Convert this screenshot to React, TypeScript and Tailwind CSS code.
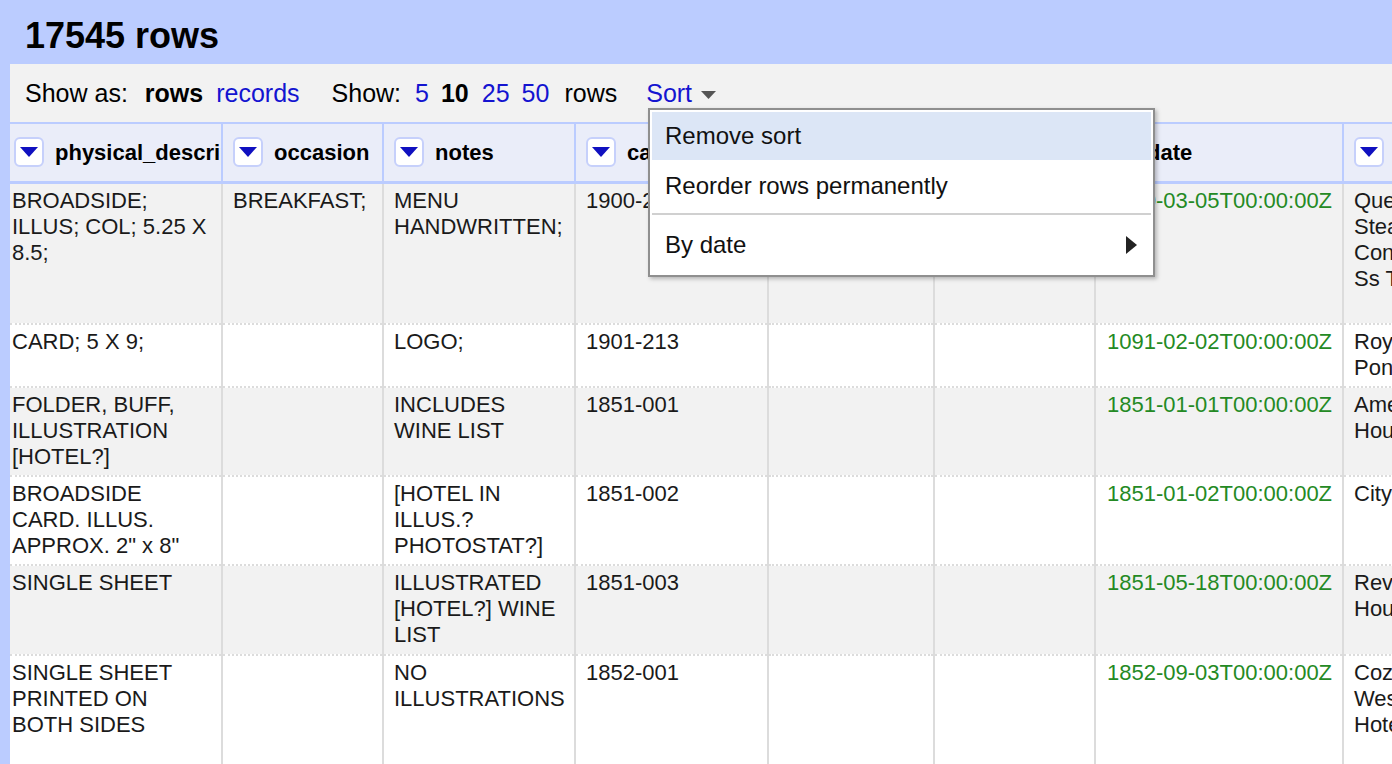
import * as React from "react";

type Col = { name: string; width: number };

const COLUMNS: Col[] = [
  { name: "physical_description", width: 212 },
  { name: "occasion", width: 161 },
  { name: "notes", width: 192 },
  { name: "call_number", width: 193 },
  { name: "keywords", width: 166 },
  { name: "language", width: 161 },
  { name: "date", width: 248 },
  { name: "location", width: 200 },
];

// each cell is a list of already-wrapped lines
type Row = { height: number; cells: string[][] };

const ROWS: Row[] = [
  {
    height: 142,
    cells: [
      ["BROADSIDE;", "ILLUS; COL; 5.25 X", "8.5;"],
      ["BREAKFAST;"],
      ["MENU", "HANDWRITTEN;"],
      ["1900-2822"],
      [],
      [],
      ["1900-03-05T00:00:00Z"],
      ["Quebec", "Steamship", "Consolidated", "Ss Trinidad"],
    ],
  },
  {
    height: 63,
    cells: [
      ["CARD; 5 X 9;"],
      [],
      ["LOGO;"],
      ["1901-213"],
      [],
      [],
      ["1091-02-02T00:00:00Z"],
      ["Royal", "Pontchartrain"],
    ],
  },
  {
    height: 89,
    cells: [
      ["FOLDER, BUFF,", "ILLUSTRATION", "[HOTEL?]"],
      [],
      ["INCLUDES", "WINE LIST"],
      ["1851-001"],
      [],
      [],
      ["1851-01-01T00:00:00Z"],
      ["American", "House"],
    ],
  },
  {
    height: 89,
    cells: [
      ["BROADSIDE", "CARD. ILLUS.", 'APPROX. 2" x 8"'],
      [],
      ["[HOTEL IN", "ILLUS.?", "PHOTOSTAT?]"],
      ["1851-002"],
      [],
      [],
      ["1851-01-02T00:00:00Z"],
      ["City Hotel"],
    ],
  },
  {
    height: 90,
    cells: [
      ["SINGLE SHEET"],
      [],
      ["ILLUSTRATED", "[HOTEL?] WINE", "LIST"],
      ["1851-003"],
      [],
      [],
      ["1851-05-18T00:00:00Z"],
      ["Revere", "House"],
    ],
  },
  {
    height: 120,
    cells: [
      ["SINGLE SHEET", "PRINTED ON", "BOTH SIDES"],
      [],
      ["NO", "ILLUSTRATIONS"],
      ["1852-001"],
      [],
      [],
      ["1852-09-03T00:00:00Z"],
      ["Cozzens'", "West Point", "Hotel"],
    ],
  },
];

function ColumnButton() {
  return (
    <span className="w-[30px] h-[30px] shrink-0 rounded-[6px] bg-white border-2 border-[#c6d0fb] flex items-center justify-center">
      <svg width="18" height="10" viewBox="0 0 18 10" aria-hidden="true">
        <path d="M0 0 L18 0 L9 10 Z" fill="#1010c0" />
      </svg>
    </span>
  );
}

function SortMenu() {
  return (
    <div className="absolute left-[648px] top-[108px] w-[507px] bg-white border-2 border-[#8f8f8f] p-[2px] shadow-[2px_2px_4px_rgba(0,0,0,0.25)] text-[24px] text-[#111]">
      <div className="h-[48px] bg-[#dce6f6] pl-[13px] flex items-center">Remove sort</div>
      <div className="h-[51px] pl-[13px] flex items-center">Reorder rows permanently</div>
      <div className="h-[2px] my-[2px] bg-[#d0d0d0]" />
      <div className="h-[56px] pl-[13px] pr-[14px] flex items-center justify-between">
        <span>By date</span>
        <svg width="11" height="18" viewBox="0 0 11 18" aria-hidden="true">
          <path d="M0 0 L11 9 L0 18 Z" fill="#222" />
        </svg>
      </div>
    </div>
  );
}

export default function App() {
  return (
    <div className="relative w-[1392px] h-[764px] overflow-hidden bg-[#bbccff] font-['Liberation_Sans',Arial,sans-serif] text-[#1a1a1a]">
      <div className="h-[64px] pl-[25px] pt-[15px] text-[36px] leading-[42px] font-bold text-black">17545 rows</div>

      <div className="ml-[10px] h-[700px] bg-white overflow-hidden">
        {/* Toolbar */}
        <div className="h-[58px] bg-[#f2f2f2] flex items-center pl-[15px] pt-[1px] text-[25px] text-black whitespace-nowrap">
          <span>Show as:</span>
          <span className="ml-[17px] font-bold">rows</span>
          <span className="ml-[13px] text-[#1414d0]">records</span>
          <span className="ml-[32px]">Show:</span>
          <span className="ml-[14px] text-[#1414d0]">5</span>
          <span className="ml-[12px] font-bold">10</span>
          <span className="ml-[13px] text-[#1414d0]">25</span>
          <span className="ml-[12px] text-[#1414d0]">50</span>
          <span className="ml-[15px]">rows</span>
          <span className="ml-[29px] text-[#1414d0]">Sort</span>
          <svg className="ml-[9px] mt-[2px]" width="15" height="8" viewBox="0 0 15 8" aria-hidden="true">
            <path d="M0 0 L15 0 L7.5 8 Z" fill="#555" />
          </svg>
        </div>

        {/* Data table */}
        <table className="table-fixed border-collapse w-[1533px]">
          <colgroup>
            {COLUMNS.map((c) => (
              <col key={c.name} style={{ width: c.width }} />
            ))}
          </colgroup>
          <thead>
            <tr className="h-[59px]">
              {COLUMNS.map((c, i) => (
                <th
                  key={c.name}
                  className={
                    i === 0
                      ? "bg-[#eaedf9] border-t-2 border-b-[3px] border-[#bbccff] pl-[4px] overflow-hidden whitespace-nowrap text-left"
                      : "bg-[#eaedf9] border-t-2 border-b-[3px] border-l-2 border-[#bbccff] pl-[10px] overflow-hidden whitespace-nowrap text-left"
                  }
                >
                  <div className="flex items-center text-[22px] font-bold text-black">
                    <ColumnButton />
                    <span className="ml-[11px]">{c.name}</span>
                  </div>
                </th>
              ))}
            </tr>
          </thead>
          <tbody>
            {ROWS.map((row, r) => (
              <tr
                key={r}
                style={{ height: row.height }}
                className={r % 2 === 0 ? "bg-[#f2f2f2]" : "bg-white"}
              >
                {row.cells.map((lines, i) => (
                  <td
                    key={COLUMNS[i].name}
                    className={
                      i === 0
                        ? "align-top pt-[4px] pl-[2px] pr-[8px] border-b-2 border-dotted border-[#dcdcdc] text-[22px] leading-[26px] whitespace-nowrap overflow-hidden"
                        : i === 6
                          ? "align-top pt-[4px] pl-[11px] pr-[8px] border-l-2 border-b-2 border-[#dcdcdc] [border-bottom-style:dotted] text-[22px] leading-[26px] whitespace-nowrap overflow-hidden text-[#248a24]"
                          : "align-top pt-[4px] pl-[10px] pr-[8px] border-l-2 border-b-2 border-[#dcdcdc] [border-bottom-style:dotted] text-[22px] leading-[26px] whitespace-nowrap overflow-hidden"
                    }
                  >
                    {lines.map((l, k) => (
                      <div key={k}>{l}</div>
                    ))}
                  </td>
                ))}
              </tr>
            ))}
          </tbody>
        </table>
      </div>

      <SortMenu />
    </div>
  );
}
